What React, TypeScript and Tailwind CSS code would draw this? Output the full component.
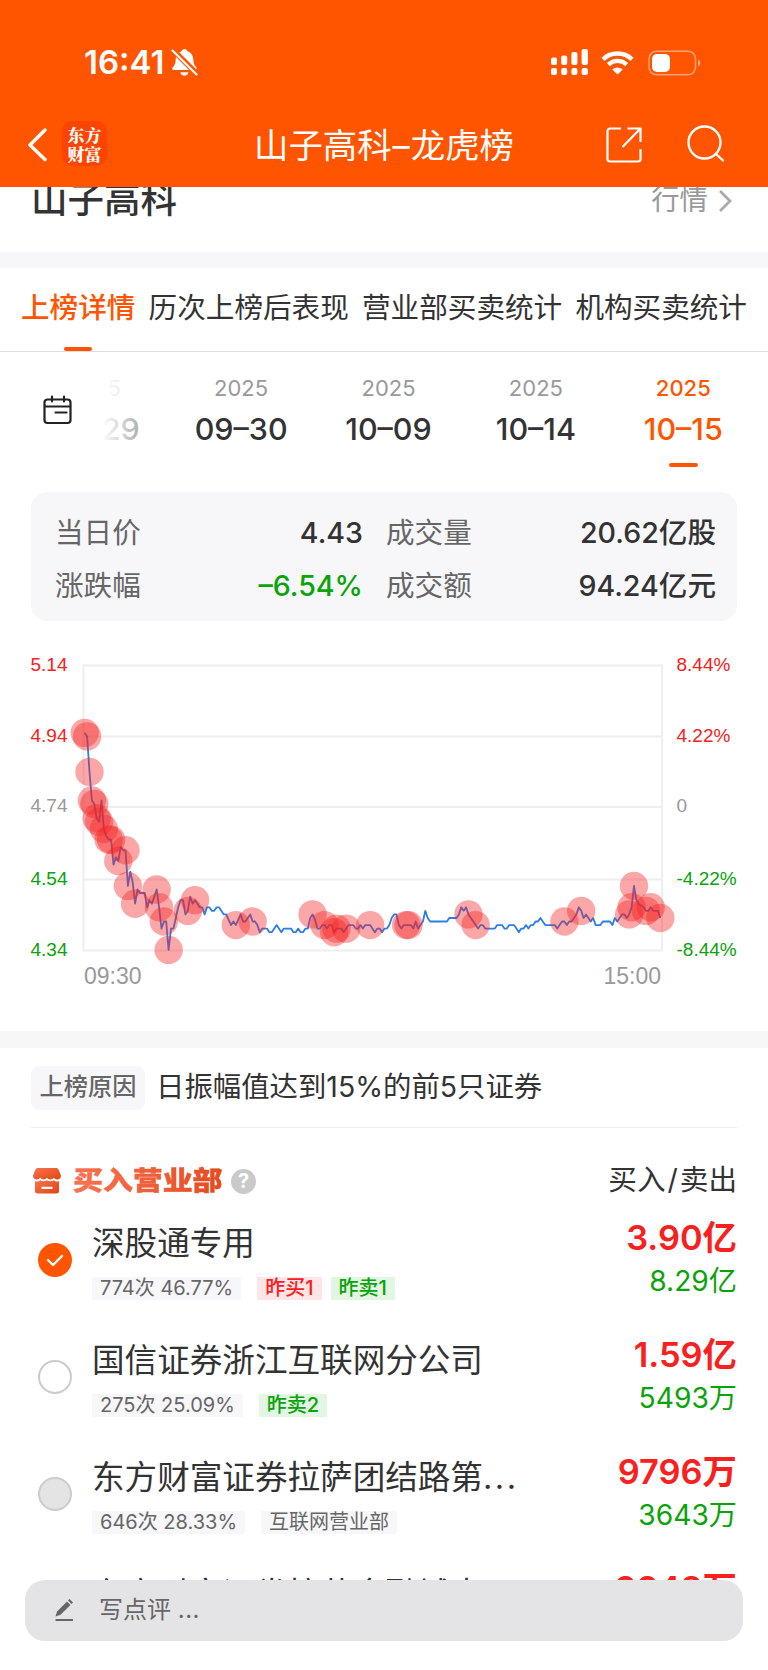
import clsx from 'clsx';

type Tag = { text: string; kind: 'plain' | 'buy' | 'sell' };

type Broker = {
  name: string;
  clipped?: boolean;
  buy: string;
  sell: string;
  state: 'checked' | 'empty' | 'disabled';
  tags: Tag[];
};

const TABS = ['上榜详情', '历次上榜后表现', '营业部买卖统计', '机构买卖统计'];

const DATES = ['09–29', '09–30', '10–09', '10–14', '10–15'];

const BROKERS: Broker[] = [
  {
    name: '深股通专用',
    buy: '3.90亿',
    sell: '8.29亿',
    state: 'checked',
    tags: [
      { text: '774次 46.77%', kind: 'plain' },
      { text: '昨买1', kind: 'buy' },
      { text: '昨卖1', kind: 'sell' },
    ],
  },
  {
    name: '国信证券浙江互联网分公司',
    buy: '1.59亿',
    sell: '5493万',
    state: 'empty',
    tags: [
      { text: '275次 25.09%', kind: 'plain' },
      { text: '昨卖2', kind: 'sell' },
    ],
  },
  {
    name: '东方财富证券拉萨团结路第',
    clipped: true,
    buy: '9796万',
    sell: '3643万',
    state: 'disabled',
    tags: [
      { text: '646次 28.33%', kind: 'plain' },
      { text: '互联网营业部', kind: 'plain' },
    ],
  },
  {
    name: '东方财富证券拉萨金融城南',
    clipped: true,
    buy: '9248万',
    sell: '3012万',
    state: 'disabled',
    tags: [],
  },
];

// [minute since open, price in cents]
const PRICES: [number, number][] = [
  [0, 495], [1, 494], [2, 484], [3, 476], [4, 475], [5, 471], [6, 470], [7, 476], [8, 468], [9, 466],
  [10, 465], [11, 465], [12, 458], [13, 460], [14, 459], [15, 463], [16, 462], [17, 462], [18, 452], [19, 456],
  [20, 453], [21, 447], [22, 451], [23, 450], [25, 450], [26, 446], [27, 448], [28, 447], [29, 449], [30, 451],
  [31, 446], [32, 440], [33, 442], [34, 442], [35, 434], [36, 440], [37, 440], [38, 443], [39, 446], [40, 448],
  [41, 448], [42, 444], [43, 445], [44, 449], [45, 447], [46, 448], [48, 446], [49, 446], [50, 444], [51, 446],
  [52, 446], [53, 445], [54, 445], [55, 446], [56, 446], [58, 444], [59, 444], [61, 441], [62, 442], [63, 441],
  [65, 444], [66, 442], [67, 442], [69, 444], [70, 442], [71, 442], [72, 441], [73, 439], [74, 440], [76, 440],
  [77, 439], [78, 439], [80, 441], [82, 439], [83, 440], [86, 440], [87, 439], [88, 439], [89, 440], [90, 439],
  [91, 439], [92, 440], [93, 440], [94, 443], [95, 444], [96, 442.5], [97, 440], [98, 440], [99, 441], [100, 441],
  [101, 440], [102, 441], [103, 441], [104, 439], [105, 440], [107, 440], [108, 439], [110, 441], [112, 441], [113, 440],
  [114, 440], [115, 441], [116, 440], [117, 441], [119, 441], [121, 439], [122, 440], [123, 440], [124, 439], [125, 440],
  [126, 440], [127, 441], [128, 443], [129, 444], [130, 444], [131, 441], [132, 440], [133, 441], [136, 441], [137, 440],
  [138, 442], [139, 440], [140, 441], [141, 442], [142, 445], [143, 443], [144, 442], [151, 442], [152, 443], [155, 443],
  [156, 444], [157, 446], [158, 445], [159, 446], [160, 444], [161, 443], [163, 441], [164, 440], [165, 441], [166, 441],
  [167, 440], [171, 440], [172, 441], [174, 441], [175, 440], [176, 440], [177, 441], [179, 441], [180, 440], [181, 439],
  [182, 440], [183, 440], [184, 441], [185, 440], [186, 441], [187, 441], [188, 442], [189, 442], [190, 443], [191, 442],
  [192, 441], [196, 441], [197, 440], [199, 442], [200, 442], [201, 441], [202, 442], [203, 442], [205, 444], [206, 446],
  [207, 445], [208, 443], [209, 444], [211, 442], [212, 443], [213, 441], [215, 441], [216, 442], [219, 442], [220, 441],
  [221, 443], [222, 442], [224, 444], [225, 444], [226, 443], [227, 444], [228, 446], [229, 452], [230, 448], [231, 447],
  [233, 446], [234, 445], [235, 445], [236, 446], [237, 445], [239, 445], [240, 443],
];

const MARKS: [number, number][] = [
  [0, 495], [1, 494], [2, 484], [3, 476], [4, 475], [5, 471], [6, 470], [8, 468], [10, 465], [11, 465],
  [14, 459], [17, 462], [18, 452], [21, 447], [30, 451], [31, 446], [33, 442], [35, 434], [43, 445], [46, 448],
  [63, 441], [70, 442], [95, 444], [100, 441], [104, 439], [105, 440], [109, 440], [119, 441], [134, 441], [135, 441],
  [160, 444], [163, 441], [200, 442], [207, 445], [227, 444], [228, 446], [229, 452], [234, 445], [236, 446], [240, 443],
];

const AXIS = [
  { y: 25.5, price: '5.14', pct: '8.44%', fill: '#f92020' },
  { y: 96.5, price: '4.94', pct: '4.22%', fill: '#f92020' },
  { y: 167, price: '4.74', pct: '0', fill: '#999999' },
  { y: 239.5, price: '4.54', pct: '-4.22%', fill: '#0aa30a' },
  { y: 310.5, price: '4.34', pct: '-8.44%', fill: '#0aa30a' },
];

const toX = (minute: number) => 84.7 + minute * 2.3985;
const toY = (cents: number) => 310 - (cents - 434) * 3.56;

function StatusBar() {
  return (
    <div className="flex h-[98px] items-center pt-[27px] pr-[67px] pl-[84px] text-white">
      <span className="text-[33px] leading-none font-semibold">16:41</span>
      <svg className="ml-[7px]" width="27" height="29" viewBox="0 0 27 29" fill="none">
        <path
          d="M13.5 1c1.6 0 2.7 1 3 2.3 3.6 1.2 5.6 4.2 5.8 8 .2 4.2.9 6 3 8.2.9 1 .2 2.5-1.2 2.5H2.8c-1.4 0-2-1.5-1.1-2.5 2.1-2.2 2.9-4 3-8.2.2-3.8 2.2-6.8 5.8-8 .3-1.3 1.4-2.3 3-2.3Z"
          fill="white"
        />
        <path d="M9.3 24.3h8.2c-.5 2-2.1 3.4-4.1 3.4s-3.6-1.4-4.1-3.4Z" fill="white" />
        <path d="M1 1 27 27" stroke="#ff5500" strokeWidth="5.5" />
        <path d="M1.5 2.5 25.5 26.5" stroke="white" strokeWidth="2.2" strokeLinecap="round" />
      </svg>
      <svg className="ml-auto" width="38" height="27" viewBox="0 0 38 27" fill="white">
        <rect x="0" y="8.5" width="6" height="7.5" rx="2" />
        <rect x="10.2" y="6.5" width="6" height="9.5" rx="2" />
        <rect x="20.4" y="3" width="6" height="13" rx="2" />
        <rect x="30.6" y="0" width="6.3" height="16" rx="2" />
        <rect x="0" y="19" width="6" height="7" rx="2" />
        <rect x="10.2" y="19" width="6" height="7" rx="2" />
        <rect x="20.4" y="19" width="6" height="7" rx="2" />
        <rect x="30.6" y="19" width="6.3" height="7" rx="2" />
      </svg>
      <svg className="ml-[12px]" width="33" height="24" viewBox="0 0 33 24" fill="none">
        <path d="M2 8.3C10 .6 23 .6 31 8.3" stroke="white" strokeWidth="4.4" />
        <path d="M7.3 13.6c5.3-4.9 13.1-4.9 18.4 0" stroke="white" strokeWidth="4.2" />
        <path d="M16.5 23.6 11.3 18.5c2.9-2.7 7.5-2.7 10.4 0Z" fill="white" />
      </svg>
      <svg className="ml-[14px]" width="53" height="26" viewBox="0 0 53 26" fill="none">
        <rect x="1" y="1.2" width="46.5" height="23.6" rx="7.5" stroke="white" strokeOpacity="0.45" strokeWidth="1.5" />
        <rect x="4" y="4" width="18" height="18" rx="5" fill="white" />
        <path d="M50 9.5c3 1.2 3 5.8 0 7Z" fill="white" fillOpacity="0.5" />
      </svg>
    </div>
  );
}

function NavBar() {
  return (
    <div className="flex h-[89px] items-center px-[27px] pb-[2px] text-white">
      <div className="flex flex-1 items-center">
        <svg className="mt-[6px]" width="20" height="34" viewBox="0 0 20 34" fill="none">
          <path d="M18 2 3 17l15 14.5" stroke="white" strokeWidth="3.4" strokeLinecap="round" strokeLinejoin="round" />
        </svg>
        <div className="mt-[4px] ml-[15px] flex size-[45px] flex-col items-center justify-center rounded-[10px] bg-[#ff4400] font-['Noto_Serif_CJK_SC','Noto_Sans_CJK_SC',serif] text-[17px] leading-[19px] font-black">
          <span>东方</span>
          <span>财富</span>
        </div>
      </div>
      <h1 className="mt-[9px] text-[34.4px] leading-none">
        山子高科<span className="mx-[1px]">–</span>龙虎榜
      </h1>
      <div className="flex flex-1 items-center justify-end">
        <svg className="mt-[6px]" width="36" height="36" viewBox="0 0 36 36" fill="none" stroke="white" strokeWidth="2.2">
          <path d="M15 1.5H4A2.5 2.5 0 0 0 1.5 4v28A2.5 2.5 0 0 0 4 34.5h28a2.5 2.5 0 0 0 2.5-2.5V22" />
          <path d="M21.5 1.5h13V15M34 2 16.5 20" />
        </svg>
        <svg className="mt-[5px] mr-[16px] ml-[45px]" width="38" height="38" viewBox="0 0 38 38" fill="none" stroke="white" strokeWidth="2.3" strokeLinecap="round">
          <circle cx="17.5" cy="17.5" r="16" />
          <path d="m29 29 7 6.5" />
        </svg>
      </div>
    </div>
  );
}

function DateStrip() {
  return (
    <div className="flex h-[140px]">
      <div className="flex w-[98px] shrink-0 justify-center pt-[43px] pl-[17px]">
        <svg width="30" height="30" viewBox="0 0 30 30" fill="none" stroke="#222222" strokeWidth="2.2" strokeLinecap="round">
          <rect x="1.5" y="4.5" width="26" height="23.5" rx="3" />
          <path d="M2 11.5h25M9 1.5v5M21 1.5v5M12.5 17.5h11" />
        </svg>
      </div>
      <div className="relative flex flex-1 justify-end overflow-hidden pr-[11px]">
        {DATES.map((date, i) => {
          const active = i === DATES.length - 1;
          return (
            <div
              key={date}
              className={clsx(
                'flex w-[147.4px] shrink-0 flex-col items-center',
                active ? 'text-[#ff5500]' : 'text-[#333333]',
              )}
            >
              <span className={clsx('mt-[24px] text-[22px] leading-[24px]', active ? 'font-medium' : 'text-[#999999]')}>
                2025
              </span>
              <span className="mt-[11px] text-[30.5px] leading-[36px] font-medium">{date}</span>
              {active && <span className="mt-[16px] h-[4px] w-[29px] rounded-full bg-[#ff5500]" />}
            </div>
          );
        })}
        <div className="absolute inset-y-0 left-0 w-[72px] bg-linear-to-r from-white from-5% to-white/30" />
      </div>
    </div>
  );
}

function Stat({ label, value, down }: { label: string; value: string; down?: boolean }) {
  return (
    <div className="flex justify-between">
      <span className="text-[#666666]">{label}</span>
      <span className={clsx('font-medium', down ? 'text-[#0aa30a]' : 'text-[#333333]')}>{value}</span>
    </div>
  );
}

function PriceChart() {
  const line = PRICES.map(([m, c]) => `${toX(m).toFixed(1)},${toY(c).toFixed(1)}`).join(' ');

  return (
    <svg className="mt-[19px] block" width="768" height="391" viewBox="0 0 768 391">
      <g stroke="#eeeeee" strokeWidth="2">
        {AXIS.map((row) => (
          <path key={row.price} d={`M83 ${row.y}H662`} />
        ))}
        <path d="M83.5 24.5V311M662 24.5V311" />
      </g>
      <polyline points={line} fill="none" stroke="#2b7de9" strokeWidth="1.8" strokeLinejoin="round" />
      <g fill="#f52222" fillOpacity="0.4">
        {MARKS.map(([m, c]) => (
          <circle key={m} cx={toX(m)} cy={toY(c)} r="14.2" />
        ))}
      </g>
      <g className="font-['Liberation_Sans',sans-serif] text-[19px]">
        {AXIS.map((row) => (
          <g key={row.price} fill={row.fill}>
            <text x="30.5" y={row.y + 5.2}>{row.price}</text>
            <text x="676.5" y={row.y + 5.2}>{row.pct}</text>
          </g>
        ))}
      </g>
      <g className="font-['Liberation_Sans',sans-serif] text-[23px]" fill="#999999">
        <text x="84" y="344">09:30</text>
        <text x="661" y="344" textAnchor="end">15:00</text>
      </g>
    </svg>
  );
}

function Radio({ state }: { state: Broker['state'] }) {
  if (state === 'checked') {
    return (
      <div className="flex size-[34px] items-center justify-center rounded-full bg-[#ff5500]">
        <svg width="18" height="14" viewBox="0 0 18 14" fill="none">
          <path d="m2 7 5 5L16 3" stroke="white" strokeWidth="2.4" strokeLinecap="round" strokeLinejoin="round" />
        </svg>
      </div>
    );
  }
  return (
    <div
      className={clsx(
        'size-[34px] rounded-full border-2 border-[#cccccc]',
        state === 'disabled' && 'bg-[#e4e4e4]',
      )}
    />
  );
}

function TagLabel({ tag }: { tag: Tag }) {
  return (
    <span
      className={clsx(
        'h-[23px] px-[8px] text-[20px] leading-[23px] whitespace-nowrap',
        tag.kind === 'plain' && 'bg-[#f7f7fa] text-[#666666]',
        tag.kind === 'buy' && 'bg-[#fee6e6] font-medium text-[#f92020]',
        tag.kind === 'sell' && 'bg-[#e3f5e3] font-medium text-[#0aa30a]',
      )}
    >
      {tag.text}
    </span>
  );
}

function BrokerRow({ broker }: { broker: Broker }) {
  const [first, ...rest] = broker.tags;
  return (
    <li className="flex h-[117px] pr-[31px] pl-[38px]">
      <div className="pt-[35px]">
        <Radio state={broker.state} />
      </div>
      <div className="ml-[20px] flex-1">
        <p className="mt-[15px] text-[32.6px] leading-[40px] whitespace-nowrap text-[#333333]">
          {broker.name}
          {broker.clipped && <span className="tracking-[2.5px]">...</span>}
        </p>
        <div className="mt-[14px] flex">
          {first && <TagLabel tag={first} />}
          <div className="ml-[16px] flex gap-[9px]">
            {rest.map((tag) => (
              <TagLabel key={tag.text} tag={tag} />
            ))}
          </div>
        </div>
      </div>
      <div className="text-right">
        <p className="mt-[10px] text-[34.4px] leading-[40px] font-semibold text-[#f92020]">{broker.buy}</p>
        <p className="mt-[5px] text-[28.2px] leading-[36px] text-[#0aa30a]">{broker.sell}</p>
      </div>
    </li>
  );
}

export default function App() {
  return (
    <div className="flex h-[1670px] w-[768px] flex-col overflow-hidden bg-white font-['Inter','Noto_Sans_CJK_SC',sans-serif]">
      <header className="h-[187px] shrink-0 bg-[#ff5500]">
        <StatusBar />
        <NavBar />
      </header>

      <main className="h-[1393px] shrink-0 overflow-hidden">
        {/* Stock name, scrolled under the header */}
        <div className="-mt-[38px] flex h-[103px] items-center justify-between pr-[36px] pl-[31px]">
          <h2 className="text-[36.5px] leading-none font-medium text-[#333333]">山子高科</h2>
          <div className="flex items-center text-[28.4px] leading-none text-[#999999]">
            <span>行情</span>
            <svg className="ml-[10px]" width="14" height="24" viewBox="0 0 14 24" fill="none">
              <path d="m2 2 10 10L2 22" stroke="#aaaaaa" strokeWidth="2.8" />
            </svg>
          </div>
        </div>

        <div className="h-[16px] bg-[#f7f7fa]" />

        <nav className="flex h-[84px] justify-between border-b border-[#dddddd] px-[21px]">
          {TABS.map((tab, i) => (
            <div
              key={tab}
              className={clsx(
                'flex flex-col items-center pt-[20px] text-[28.6px] leading-[40px]',
                i === 0 ? 'font-medium text-[#ff5500]' : 'text-[#333333]',
              )}
            >
              {tab}
              {i === 0 && <span className="mt-[19px] h-[4px] w-[28px] rounded-full bg-[#ff5500]" />}
            </div>
          ))}
        </nav>

        <DateStrip />

        <section className="mx-[31px] grid h-[129px] grid-cols-[308px_330px] content-start gap-x-[23px] rounded-[16px] bg-[#f7f7fa] pt-[14px] pl-[24px] text-[28.6px] leading-[53px]">
          <Stat label="当日价" value="4.43" />
          <Stat label="成交量" value="20.62亿股" />
          <Stat label="涨跌幅" value="–6.54%" down />
          <Stat label="成交额" value="94.24亿元" />
        </section>

        <PriceChart />

        <div className="h-[17px] bg-[#f7f7fa]" />

        <div className="mx-[31px] flex h-[80px] items-center border-b border-[#eeeeee] text-[#333333]">
          <span className="flex h-[44px] w-[114px] items-center justify-center rounded-[8px] bg-[#f7f7fa] text-[24.2px] font-medium text-[#666666]">
            上榜原因
          </span>
          <span className="ml-[11px] text-[28.4px] leading-none">日振幅值达到15%的前5只证券</span>
        </div>

        <div className="mx-[31px] flex h-[92px] items-center pt-[14px]">
          <svg className="ml-[2px]" width="28" height="26" viewBox="0 0 28 26">
            <defs>
              <linearGradient id="store" x1="0" y1="0" x2="1" y2="1">
                <stop offset="0" stopColor="#fa7250" />
                <stop offset="1" stopColor="#e04510" />
              </linearGradient>
            </defs>
            <path
              d="M5 0h18c1.2 0 2 .5 2.5 1.6L28 7.5c0 2.5-1.6 4-3.7 4-1.8 0-2.8-.9-3.6-1.7-1.7 2.2-5 2.2-6.7 0-1.7 2.2-5 2.2-6.7 0-.8.8-1.8 1.7-3.6 1.7C1.6 11.500 0 10 0 7.500l2.500-5.900C3 .5 3.800 0 5 0Z"
              fill="url(#store)"
            />
            <path
              d="M2 13.2c2.2.6 4 .1 5.300-1 2 1.500 4.700 1.500 6.700 0 2 1.500 4.700 1.500 6.700 0 1.300 1.100 3.100 1.600 5.300 1V23a2.500 2.500 0 0 1-2.500 2.500h-19A2.500 2.500 0 0 1 2 23ZM8.500 18.800V21h11v-2.200Z"
              fill="url(#store)"
              fillRule="evenodd"
            />
          </svg>
          <h3 className="ml-[12px] w-[150px] origin-left scale-x-[1.15] bg-linear-to-r from-[#fa7250] to-[#e04510] bg-clip-text text-[26px] leading-[34px] font-black text-transparent [-webkit-text-stroke:0.5px_transparent]">
            买入营业部
          </h3>
          <div className="ml-[8px] flex size-[25px] items-center justify-center rounded-full bg-[#c9c9c9] text-[20px] leading-none font-bold text-white">
            ?
          </div>
          <span className="mb-[2px] ml-auto text-[28.6px] leading-none text-[#333333]">
            买入<span className="mx-[2px]">/</span>卖出
          </span>
        </div>

        <ul className="-mt-[12px]">
          {BROKERS.map((broker) => (
            <BrokerRow key={broker.name} broker={broker} />
          ))}
        </ul>
      </main>

      <footer className="flex-1 bg-white px-[25px]">
        <div className="flex h-[61px] items-center rounded-[20px] bg-[#e4e4e6] pb-[2px] pl-[29px] text-[24px] text-[#666666]">
          <svg width="20" height="24" viewBox="0 0 20 24" fill="#666666">
            <path d="M1.5 18.5 3 13.5 13 3.5l3.5 3.5-10 9.8ZM14 2.5 15.5 1 19 4.5 17.5 6Z" />
            <rect x="1.5" y="21" width="17.5" height="2" />
          </svg>
          <span className="ml-[25px]">
            写点评 <span className="tracking-[0.5px]">...</span>
          </span>
        </div>
      </footer>
    </div>
  );
}
